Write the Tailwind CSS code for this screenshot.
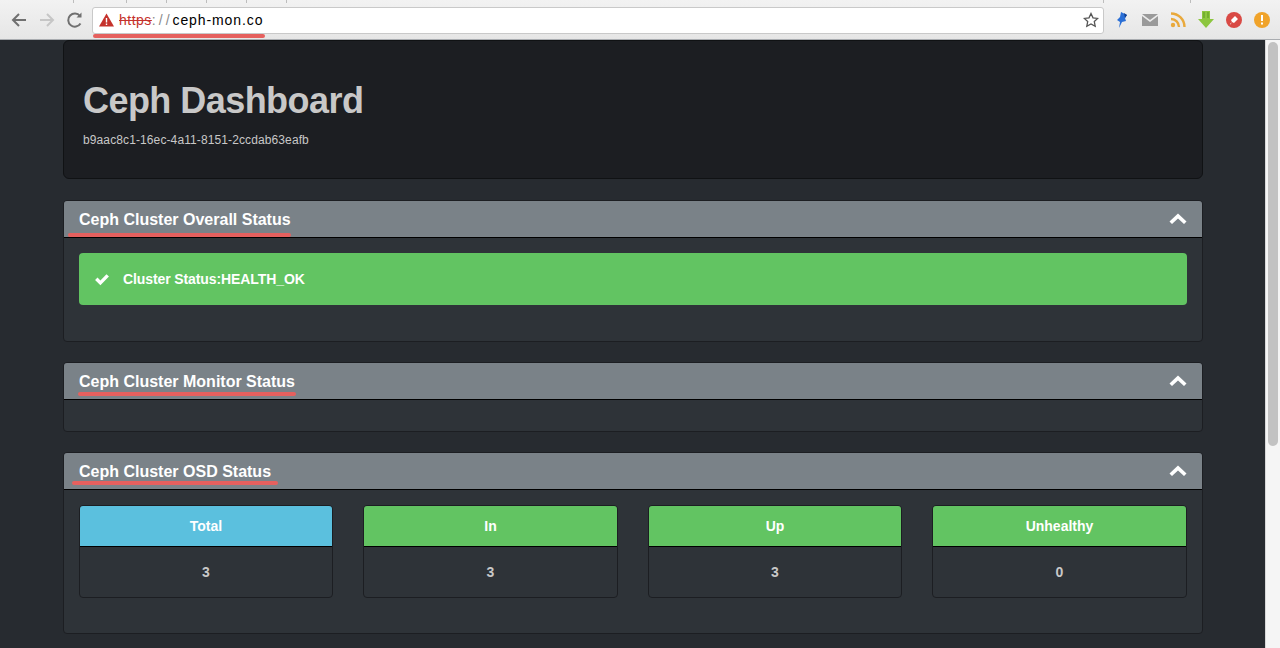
<!DOCTYPE html>
<html lang="en">
<head>
    <meta charset="UTF-8">
    <title>Ceph Dashboard</title>
    <script src="https://cdn.jsdelivr.net/npm/@tailwindcss/browser@4"></script>
</head>
<body class="h-[648px] overflow-hidden bg-[#272b30] font-['Liberation_Sans',Arial,sans-serif]">
    <!-- browser toolbar -->
    <div class="relative flex h-[40px] items-center border-b border-[#a9acb0] bg-[#eeeeee] bg-gradient-to-b from-[#f2f2f2] to-[#e6e6e6]">
        <div class="absolute left-[73px] top-0 flex h-[3px]">
            <span class="w-px bg-[#bdbdbd]"></span>
            <span class="ml-[52px] w-px bg-[#bdbdbd]"></span>
            <span class="ml-[39px] w-px bg-[#bdbdbd]"></span>
            <span class="ml-[39px] w-px bg-[#bdbdbd]"></span>
            <span class="ml-[39px] w-px bg-[#bdbdbd]"></span>
            <span class="ml-[39px] w-px bg-[#bdbdbd]"></span>
        </div>
        <div class="absolute left-[1103px] top-0 flex h-[3px]">
            <span class="w-px bg-[#bdbdbd]"></span>
            <span class="ml-[86px] w-px bg-[#bdbdbd]"></span>
        </div>
        <div class="flex w-[92px] items-center gap-[8px] pl-[9px]">
            <svg class="h-[20px] w-[20px]" viewBox="0 0 20 20" fill="none" stroke="#707070" stroke-width="2"><path d="M17 10H4M10 4l-6 6 6 6"/></svg>
            <svg class="h-[20px] w-[20px]" viewBox="0 0 20 20" fill="none" stroke="#c6c6c6" stroke-width="2"><path d="M3 10h13M10 4l6 6-6 6"/></svg>
            <svg class="h-[20px] w-[20px]" viewBox="0 0 20 20" fill="none" stroke="#707070" stroke-width="2"><path d="M15.500 13.500A6.600 6.600 0 1 1 15 6"/><path d="M16.500 2.500v5h-5" fill="#707070" stroke="none"/></svg>
        </div>
        <div class="mt-[1px] flex h-[27px] w-[1012px] items-center rounded-[3px] border border-[#c9c9c9] bg-white pl-[6px] pr-[4px]">
            <svg class="h-[14px] w-[15px]" viewBox="0 0 15 14"><path d="M7.500 0.500L15 13.500H0z" fill="#c5322c"/><path d="M6.800 5h1.400v4.500H6.800zM6.800 10.500h1.400V12H6.800z" fill="#fff"/></svg>
            <span class="ml-[5px] text-[14px] tracking-[0.5px] text-[#c5322c] line-through">https</span>
            <span class="text-[14px] tracking-[3px] text-[#8a8a8a]">://</span>
            <span class="text-[14px] tracking-[0.9px] text-black">ceph-mon.co</span>
            <svg class="ml-auto h-[16px] w-[16px]" viewBox="0 0 16 16" fill="none" stroke="#555" stroke-width="1.300"><path d="M8 1.500l2 4.300 4.700.6-3.400 3.200.9 4.700L8 12l-4.200 2.300.9-4.700L1.300 6.400 6 5.800z"/></svg>
        </div>
        <div class="flex items-center gap-[8px] pl-[8px]">
            <svg class="h-[20px] w-[20px]" viewBox="0 0 20 20"><path d="M9 2l6 3-2 3 1 3-4 1-3 6 1-6-3-2 3-3z" fill="#2a6fd6"/><path d="M12 3l3 2-2 3z" fill="#123f8f"/></svg>
            <svg class="h-[20px] w-[20px]" viewBox="0 0 20 20"><path d="M2 4h16L10 10z" fill="#9a9a9a"/><path d="M2 6l8 6 8-6v10H2z" fill="#9a9a9a"/></svg>
            <svg class="h-[20px] w-[20px]" viewBox="0 0 20 20" fill="none" stroke="#e9a93c" stroke-width="2.400"><path d="M3 3.500c7.500 0 13.500 6 13.500 13.500M3 9c4.500 0 8 3.500 8 8"/><circle cx="5" cy="15" r="2.200" fill="#e9a93c" stroke="none"/></svg>
            <svg class="h-[20px] w-[20px]" viewBox="0 0 20 20"><path d="M6 1h8v8h4l-8 9-8-9h4z" fill="#8cc63f"/><path d="M8 2v6M12 2v6" stroke="#5c9a22" stroke-width="1"/></svg>
            <svg class="h-[20px] w-[20px]" viewBox="0 0 20 20"><circle cx="10" cy="10" r="8" fill="#d94a45"/><path d="M6 14l2-2-1-2 4-4 3 3-4 4-2-1-1.500 2.500z" fill="#fff"/></svg>
            <svg class="h-[20px] w-[20px]" viewBox="0 0 20 20"><circle cx="10" cy="10" r="8" fill="#f0a32a"/><path d="M9 5h2v6H9zM9 12.500h2v2H9z" fill="#fff"/></svg>
        </div>
        <div class="absolute left-[93px] top-[34px] h-[4px] w-[172px] rounded-full bg-[#e5605e]"></div>
    </div>

    <div class="relative flex">
        <!-- page content -->
        <div class="w-[1265px] shrink-0 pl-[63px] pr-[62px]">
            <div class="mb-[21px] h-[139px] rounded-[6px] border border-[#101214] bg-[#1c1e22] pl-[19px] pt-[37px]">
                <h1 class="text-[36px] leading-[46px] font-bold tracking-[-0.55px] text-[#c8c8c8]">Ceph Dashboard</h1>
                <p class="mt-[8px] text-[12px] leading-[17px] tracking-[0.11px] text-[#c8c8c8]">b9aac8c1-16ec-4a11-8151-2ccdab63eafb</p>
            </div>

            <section class="relative mb-[20px] rounded-[4px] border border-[#1c1e22] bg-[#2e3338]">
                <div class="flex h-[37px] items-center justify-between rounded-t-[3px] border-b border-black bg-[#7a8288] pl-[15px] pr-[15px]">
                    <h2 class="pt-[2px] text-[16px] font-bold text-white">Ceph Cluster Overall Status</h2>
                    <svg class="h-[12px] w-[18px]" viewBox="0 0 18 12"><path d="M9 0.500L17.500 8.500 15 11 9 5.500 3 11 0.500 8.500z" fill="#fff"/></svg>
                </div>
                <div class="absolute left-[4px] top-[32px] h-[4px] w-[223px] rounded-full bg-[#e5605e]"></div>
                <div class="p-[15px] pb-[36px]">
                    <div class="flex h-[52px] items-center rounded-[4px] bg-[#62c462] pl-[15px] text-[14px] font-bold text-white">
                        <svg class="h-[15px] w-[16px]" viewBox="0 0 15 14"><path d="M1 7.500l2.300-2.300 2.700 2.700L11.700 2 14 4.300 6 12.300z" fill="#fff"/></svg>
                        <span class="ml-[13px] tracking-[-0.1px]">Cluster Status:HEALTH_OK</span>
                    </div>
                </div>
            </section>

            <section class="relative mb-[20px] rounded-[4px] border border-[#1c1e22] bg-[#2e3338]">
                <div class="flex h-[37px] items-center justify-between rounded-t-[3px] border-b border-black bg-[#7a8288] pl-[15px] pr-[15px]">
                    <h2 class="pt-[2px] text-[16px] font-bold text-white">Ceph Cluster Monitor Status</h2>
                    <svg class="h-[12px] w-[18px]" viewBox="0 0 18 12"><path d="M9 0.500L17.500 8.500 15 11 9 5.500 3 11 0.500 8.500z" fill="#fff"/></svg>
                </div>
                <div class="absolute left-[14px] top-[29px] h-[4px] w-[218px] rounded-full bg-[#e5605e]"></div>
                <div class="h-[31px]"></div>
            </section>

            <section class="relative rounded-[4px] border border-[#1c1e22] bg-[#2e3338]">
                <div class="flex h-[37px] items-center justify-between rounded-t-[3px] border-b border-black bg-[#7a8288] pl-[15px] pr-[15px]">
                    <h2 class="pt-[2px] text-[16px] font-bold text-white">Ceph Cluster OSD Status</h2>
                    <svg class="h-[12px] w-[18px]" viewBox="0 0 18 12"><path d="M9 0.500L17.500 8.500 15 11 9 5.500 3 11 0.500 8.500z" fill="#fff"/></svg>
                </div>
                <div class="absolute left-[8px] top-[28px] h-[4px] w-[206px] rounded-full bg-[#e5605e]"></div>
                <div class="grid grid-cols-[254px_255px_254px_255px] gap-[30px] p-[15px] pb-[35px]">
                    <div class="h-[93px] rounded-[4px] border border-[#1c1e22] text-center text-[14px] font-bold">
                        <div class="flex h-[41px] items-center justify-center rounded-t-[3px] border-b border-black bg-[#5bc0de] text-white">Total</div>
                        <div class="flex h-[50px] items-center justify-center text-[#c8c8c8]">3</div>
                    </div>
                    <div class="h-[93px] rounded-[4px] border border-[#1c1e22] text-center text-[14px] font-bold">
                        <div class="flex h-[41px] items-center justify-center rounded-t-[3px] border-b border-black bg-[#62c462] text-white">In</div>
                        <div class="flex h-[50px] items-center justify-center text-[#c8c8c8]">3</div>
                    </div>
                    <div class="h-[93px] rounded-[4px] border border-[#1c1e22] text-center text-[14px] font-bold">
                        <div class="flex h-[41px] items-center justify-center rounded-t-[3px] border-b border-black bg-[#62c462] text-white">Up</div>
                        <div class="flex h-[50px] items-center justify-center text-[#c8c8c8]">3</div>
                    </div>
                    <div class="h-[93px] rounded-[4px] border border-[#1c1e22] text-center text-[14px] font-bold">
                        <div class="flex h-[41px] items-center justify-center rounded-t-[3px] border-b border-black bg-[#62c462] text-white">Unhealthy</div>
                        <div class="flex h-[50px] items-center justify-center text-[#c8c8c8]">0</div>
                    </div>
                </div>
            </section>
        </div>

        <!-- scrollbar -->
        <div class="h-[608px] w-[15px] shrink-0 border-l border-[#d8d8d8] bg-[#f5f5f5] pl-[2px] pt-[2px]">
            <div class="h-[404px] w-[10px] rounded-full bg-[#c2c2c2]"></div>
        </div>
    </div>
</body>
</html>
